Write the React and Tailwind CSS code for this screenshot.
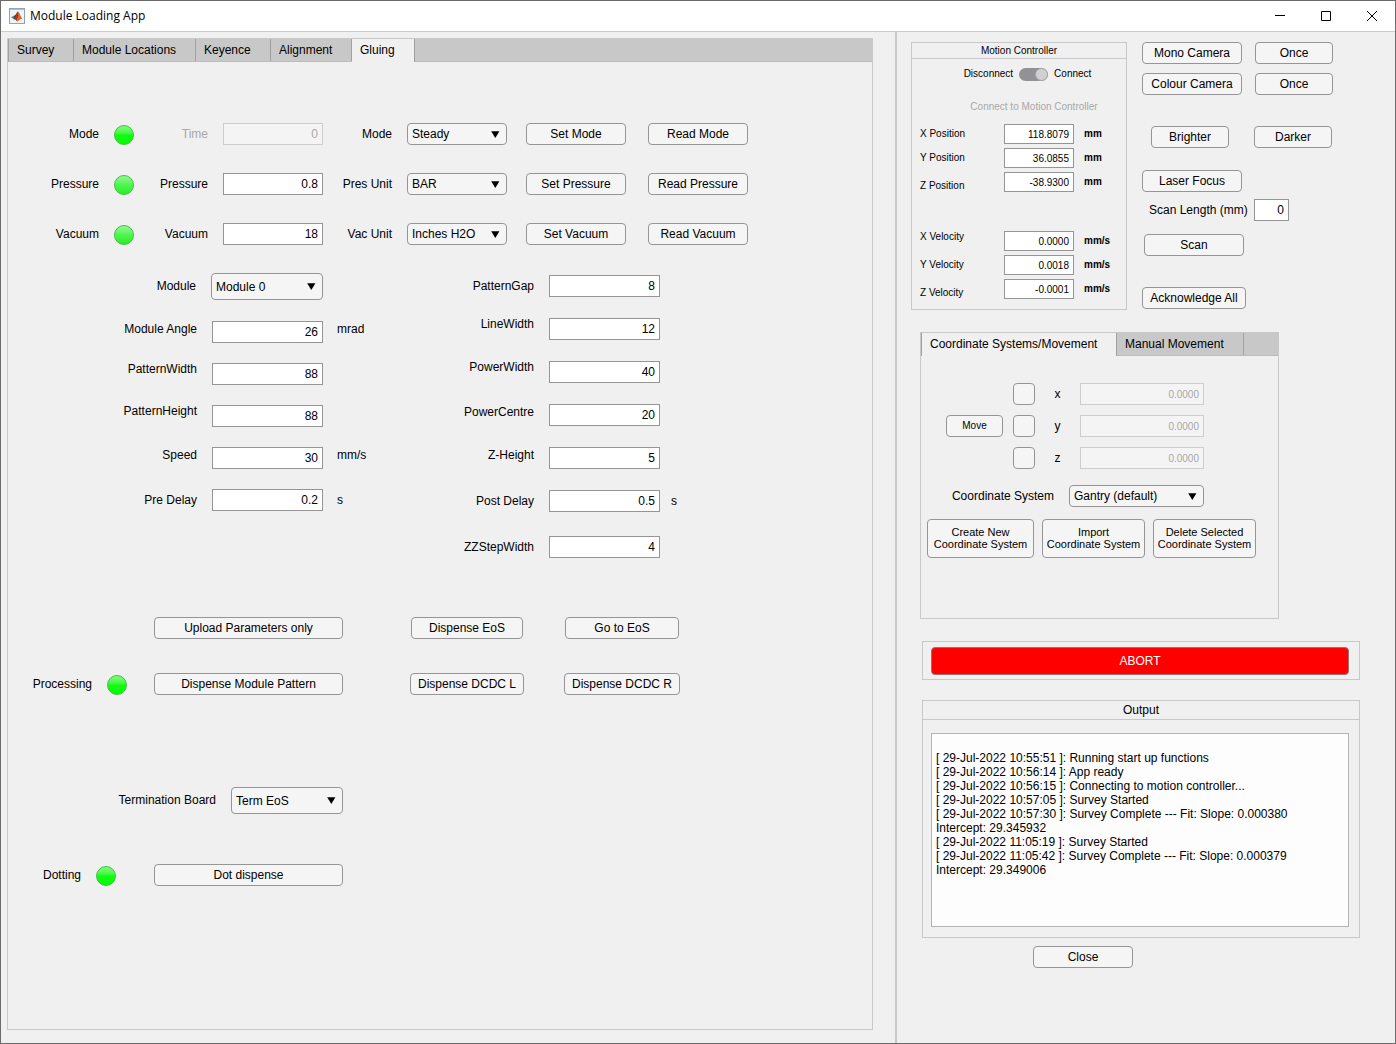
import { useState } from 'react';

const DISPENSER_ROWS = [
  { key: 'mode',     name: 'Mode',     field: 'Time',     value: '0',   disabled: true,  unitLabel: 'Mode',      unit: 'Steady',     ledDim: false },
  { key: 'pressure', name: 'Pressure', field: 'Pressure', value: '0.8', disabled: false, unitLabel: 'Pres Unit', unit: 'BAR',        ledDim: true },
  { key: 'vacuum',   name: 'Vacuum',   field: 'Vacuum',   value: '18',  disabled: false, unitLabel: 'Vac Unit',  unit: 'Inches H2O', ledDim: true },
];

const LEFT_PARAMS = [
  { label: 'Module Angle',  value: '26',  unit: 'mrad', align: 'top' },
  { label: 'PatternWidth',  value: '88',  align: 'high' },
  { label: 'PatternHeight', value: '88',  align: 'high' },
  { label: 'Speed',         value: '30',  unit: 'mm/s', align: 'top' },
  { label: 'Pre Delay',     value: '0.2', unit: 's',    align: 'center' },
];

const RIGHT_PARAMS = [
  { label: 'PatternGap',  value: '8',   align: 'center' },
  { label: 'LineWidth',   value: '12',  align: 'high' },
  { label: 'PowerWidth',  value: '40',  align: 'high' },
  { label: 'PowerCentre', value: '20',  align: 'top' },
  { label: 'Z-Height',    value: '5',   align: 'top' },
  { label: 'Post Delay',  value: '0.5', unit: 's', align: 'center' },
];

const POSITIONS = [
  { label: 'X Position', value: '118.8079', unit: 'mm', align: 'center' },
  { label: 'Y Position', value: '36.0855',  unit: 'mm', align: 'center' },
  { label: 'Z Position', value: '-38.9300', unit: 'mm', align: 'low' },
];

const VELOCITIES = [
  { label: 'X Velocity', value: '0.0000',  unit: 'mm/s', align: 'high' },
  { label: 'Y Velocity', value: '0.0018',  unit: 'mm/s', align: 'center' },
  { label: 'Z Velocity', value: '-0.0001', unit: 'mm/s', align: 'low' },
];

const ALIGN_CLASSES = {
  high:   'self-start leading-3',
  top:    'self-start leading-4',
  center: 'self-center leading-4',
  low:    'self-end leading-3',
};

const LOG = `
[ 29-Jul-2022 10:55:51 ]: Running start up functions
[ 29-Jul-2022 10:56:14 ]: App ready
[ 29-Jul-2022 10:56:15 ]: Connecting to motion controller...
[ 29-Jul-2022 10:57:05 ]: Survey Started
[ 29-Jul-2022 10:57:30 ]: Survey Complete --- Fit: Slope: 0.000380
Intercept: 29.345932
[ 29-Jul-2022 11:05:19 ]: Survey Started
[ 29-Jul-2022 11:05:42 ]: Survey Complete --- Fit: Slope: 0.000379
Intercept: 29.349006`;

const toId = (text) => text.toLowerCase().replace(/[^a-z0-9]+/g, '-');

function Button({ className = 'w-[100px]', children }) {
  return (
    <button
      type="button"
      className={`h-[22px] shrink-0 rounded border border-[#959595] bg-[#f5f5f5] text-center leading-4 whitespace-nowrap hover:bg-white ${className}`}
    >
      {children}
    </button>
  );
}

function NumberBox({ id, value, disabled, label, className = 'h-[22px] w-[111px]' }) {
  return (
    <input
      id={id}
      type="text"
      aria-label={label}
      defaultValue={value}
      disabled={disabled}
      className={`shrink-0 border border-[#959595] bg-white pr-1 text-right disabled:border-[#cdcdcd] disabled:bg-[#f4f4f4] disabled:text-[#a8a8a8] ${className}`}
    />
  );
}

function DropDown({ id, value, className = 'h-[22px] w-[100px]' }) {
  return (
    <div className={`grid shrink-0 items-center ${className}`}>
      <select
        id={id}
        className="col-start-1 row-start-1 h-full w-full appearance-none rounded border border-[#959595] bg-[#f5f5f5] pl-1"
      >
        <option>{value}</option>
      </select>
      <svg className="pointer-events-none col-start-1 row-start-1 mr-[7px] justify-self-end" width="9" height="7" viewBox="0 0 9 7" aria-hidden="true">
        <path d="M0.2 0.2h8.2L4.3 7z" fill="#000" />
      </svg>
    </div>
  );
}

function Led({ label, dim }) {
  return (
    <span
      role="img"
      aria-label={`${label} status: on`}
      className={`size-5 shrink-0 self-end rounded-full border border-[#3fc03f] bg-linear-to-b ${dim ? 'from-[#8ffa8f] via-[#4df54d] to-[#22f022]' : 'from-[#7dfa7d] via-[#12fb12] to-[#00ff00]'}`}
    />
  );
}

function ParamRow({ row, labelWidth, unitGap }) {
  const id = toId(row.label);
  return (
    <div className="flex h-[22px]">
      <label htmlFor={id} className={`mr-[15px] text-right ${labelWidth} ${ALIGN_CLASSES[row.align]}`}>{row.label}</label>
      <NumberBox id={id} value={row.value} />
      {row.unit && <span className={`${unitGap} ${ALIGN_CLASSES[row.align]}`}>{row.unit}</span>}
    </div>
  );
}

function AxisRow({ row }) {
  const id = toId(row.label);
  return (
    <div className="flex h-5">
      <label htmlFor={id} className={`w-[84px] ${ALIGN_CLASSES[row.align]}`}>{row.label}</label>
      <NumberBox id={id} value={row.value} className="h-5 w-[70px]" />
      <span className="ml-[10px] self-center font-bold">{row.unit}</span>
    </div>
  );
}

function TabList({ children }) {
  return (
    <div role="tablist" className="flex h-[23px] border-b border-l border-b-[#bcbcbc] border-l-[#a0a0a0] bg-[#c8c8c8]">
      {children}
    </div>
  );
}

function Tab({ active, width, children }) {
  return (
    <button
      type="button"
      role="tab"
      aria-selected={active}
      className={`border-r border-[#a0a0a0] pl-2 text-left ${active ? '-mb-px bg-[#f0f0f0] pb-px' : 'bg-[#c8c8c8]'} ${width}`}
    >
      {children}
    </button>
  );
}

function TitleBar() {
  return (
    <header className="flex h-[31px] items-center border-b border-[#cccccc] bg-white pl-2">
      <svg width="16" height="16" viewBox="0 0 16 16" aria-hidden="true">
        <rect x="0.5" y="0.5" width="15" height="15" fill="#eef3f8" stroke="#8aa5b8" />
        <path d="M1 1.500h14" stroke="#a9c3d4" />
        <path d="M2 9.200l3.300-1.600 1.600 1.800-2 1.900z" fill="#3f86a8" />
        <path d="M5.200 7.700C6.800 7 7.700 4.100 9 3.400L7.500 10.500 4.900 11.300z" fill="#5a3f48" />
        <path d="M9 3.400c1.600.6 2.800 6 5 8.200-1.800-.9-2.800-.5-3.600.3-.9.9-1.600 1.600-2.600 1.500C9 10 9.200 6 9 3.400z" fill="#e0662e" />
        <path d="M9 3.400c.5 2.600.2 6.600-1.200 10-.4-1.100-1.400-1.900-2.900-2.100C7 10.200 7.800 4.600 9 3.400z" fill="#a8371f" />
      </svg>
      <h1 className="ml-[5px] flex-1 font-['Open_Sans',sans-serif] text-[12px]">Module Loading App</h1>
      <button type="button" aria-label="Minimize" className="flex h-full w-[46px] items-center justify-center">
        <svg width="10" height="10" viewBox="0 0 10 10"><path d="M0 4.5h10" stroke="#000" /></svg>
      </button>
      <button type="button" aria-label="Maximize" className="flex h-full w-[46px] items-center justify-center">
        <svg width="10" height="10" viewBox="0 0 10 10"><path d="M.5.5h9v9h-9z" fill="none" stroke="#000" /></svg>
      </button>
      <button type="button" aria-label="Close window" className="flex h-full w-[46px] items-center justify-center">
        <svg width="10" height="10" viewBox="0 0 10 10"><path d="M0 0l10 10M10 0L0 10" stroke="#000" /></svg>
      </button>
    </header>
  );
}

function GluingPanel() {
  return (
    <section className="flex flex-1 flex-col border border-[#c8c8c8]">
      <TabList>
        <Tab width="w-[65px]">Survey</Tab>
        <Tab width="w-[122px]">Module Locations</Tab>
        <Tab width="w-[75px]">Keyence</Tab>
        <Tab width="w-[81px]">Alignment</Tab>
        <Tab active width="w-[63px]">Gluing</Tab>
      </TabList>

      <div role="tabpanel" className="pt-[61px]">
        <div className="flex flex-col gap-7">
          {DISPENSER_ROWS.map((row) => (
            <div key={row.key} className="flex h-[22px] items-center">
              <span className="mr-[15px] w-[91px] text-right">{row.name}</span>
              <Led label={row.name} dim={row.ledDim} />
              <label htmlFor={`${row.key}-value`} className={`mr-[15px] w-[74px] text-right ${row.disabled ? 'text-[#a8a8a8]' : ''}`}>
                {row.field}
              </label>
              <NumberBox id={`${row.key}-value`} value={row.value} disabled={row.disabled} className="h-[22px] w-[100px]" />
              <label htmlFor={`${row.key}-unit`} className="mr-[15px] w-[69px] text-right">{row.unitLabel}</label>
              <DropDown id={`${row.key}-unit`} value={row.unit} />
              <div className="ml-[19px] flex gap-[22px]">
                <Button>Set {row.name}</Button>
                <Button>Read {row.name}</Button>
              </div>
            </div>
          ))}
        </div>

        <div className="mt-7 flex">
          <div className="flex w-[400px] flex-col gap-5">
            <div className="flex h-7 items-start">
              <label htmlFor="module" className="mr-[15px] w-[188px] text-right leading-[26px]">Module</label>
              <DropDown id="module" value="Module 0" className="h-[27px] w-28" />
            </div>
            {LEFT_PARAMS.map((row) => (
              <ParamRow key={row.label} row={row} labelWidth="w-[189px]" unitGap="ml-[14px]" />
            ))}
          </div>
          <div className="flex flex-col gap-6 pt-[2px]">
            <div className="flex flex-col gap-[21px]">
              {RIGHT_PARAMS.map((row) => (
                <ParamRow key={row.label} row={row} labelWidth="w-[126px]" unitGap="ml-[11px]" />
              ))}
            </div>
            <ParamRow row={{ label: 'ZZStepWidth', value: '4', align: 'center' }} labelWidth="w-[126px]" unitGap="ml-[11px]" />
          </div>
        </div>

        <div className="mt-[59px] flex pl-[146px]">
          <Button className="w-[189px]">Upload Parameters only</Button>
          <div className="ml-[68px] flex gap-[42px]">
            <Button className="w-28">Dispense EoS</Button>
            <Button className="w-[114px]">Go to EoS</Button>
          </div>
        </div>
        <div className="mt-[34px] flex h-[22px] items-center">
          <span className="mr-[15px] w-[84px] text-right">Processing</span>
          <Led label="Processing" />
          <Button className="ml-[27px] w-[189px]">Dispense Module Pattern</Button>
          <div className="ml-[67px] flex gap-10">
            <Button className="w-[114px]">Dispense DCDC L</Button>
            <Button className="w-[116px]">Dispense DCDC R</Button>
          </div>
        </div>

        <div className="mt-[92px] flex items-start">
          <label htmlFor="termination" className="mr-[15px] w-[208px] text-right leading-[26px]">Termination Board</label>
          <DropDown id="termination" value="Term EoS" className="h-[27px] w-28" />
        </div>
        <div className="mt-[50px] flex h-[22px] items-center">
          <span className="mr-[15px] w-[73px] text-right">Dotting</span>
          <Led label="Dotting" />
          <Button className="ml-[38px] w-[189px]">Dot dispense</Button>
        </div>
      </div>
    </section>
  );
}

function MotionController() {
  const [connected, setConnected] = useState(true);

  return (
    <section className="h-[268px] w-[216px] shrink-0 border border-[#c8c8c8] text-[10px]">
      <h2 className="h-4 border-b border-[#c8c8c8] text-center leading-4">Motion Controller</h2>
      <div className="mt-2 flex h-[14px] items-center justify-center pl-[17px]">
        <span>Disconnect</span>
        <button
          type="button"
          role="switch"
          aria-label="Motion controller connection"
          aria-checked={connected}
          onClick={() => setConnected(!connected)}
          className={`mx-[6px] flex h-[13px] w-[29px] rounded-full bg-[#929296] ${connected ? 'justify-end' : 'justify-start'}`}
        >
          <span className="size-[13px] rounded-full border border-[#a6a6a6] bg-[#d0d0d0]" />
        </button>
        <span>Connect</span>
      </div>
      <p className="mt-[18px] pl-[30px] text-center leading-4 text-[#a8a8a8]">Connect to Motion Controller</p>
      <div className="mt-[9px] flex flex-col gap-1 pl-2">
        {POSITIONS.map((row) => <AxisRow key={row.label} row={row} />)}
      </div>
      <div className="mt-[39px] flex flex-col gap-1 pl-2">
        {VELOCITIES.map((row) => <AxisRow key={row.label} row={row} />)}
      </div>
    </section>
  );
}

function CameraControls() {
  return (
    <div className="flex flex-col items-start">
      <div className="flex flex-col gap-[9px]">
        <div className="flex gap-[13px]">
          <Button>Mono Camera</Button>
          <Button className="w-[78px]">Once</Button>
        </div>
        <div className="flex gap-[13px]">
          <Button>Colour Camera</Button>
          <Button className="w-[78px]">Once</Button>
        </div>
      </div>
      <div className="mt-[31px] ml-[9px] flex gap-[25px]">
        <Button className="w-[78px]">Brighter</Button>
        <Button className="w-[78px]">Darker</Button>
      </div>
      <Button className="mt-[22px] w-[100px]">Laser Focus</Button>
      <div className="mt-[7px] ml-[7px] flex items-center">
        <label htmlFor="scan-length" className="w-[105px]">Scan Length (mm)</label>
        <NumberBox id="scan-length" value="0" className="h-[22px] w-[35px]" />
      </div>
      <Button className="mt-[13px] ml-[2px] w-[100px]">Scan</Button>
      <Button className="mt-[31px] w-[104px]">Acknowledge All</Button>
    </div>
  );
}

function CoordinateButton({ width, action }) {
  return (
    <button type="button" className={`h-[39px] rounded border border-[#959595] bg-[#f5f5f5] pb-[2px] leading-3 whitespace-nowrap hover:bg-white ${width}`}>
      {action}<br />Coordinate System
    </button>
  );
}

function CoordinatePanel() {
  return (
    <section className="h-[287px] w-[359px] border border-[#c8c8c8]">
      <TabList>
        <Tab active width="w-[195px]">Coordinate Systems/Movement</Tab>
        <Tab width="w-[127px]">Manual Movement</Tab>
      </TabList>

      <div role="tabpanel" className="pt-[27px]">
        <div className="flex items-center pl-[25px]">
          <Button className="w-[57px] text-[10px]">Move</Button>
          <div className="ml-[10px] flex flex-col gap-[10px]">
            {['x', 'y', 'z'].map((axis) => (
              <div key={axis} className="flex items-center">
                <input
                  id={`move-${axis}`}
                  type="checkbox"
                  className="size-[22px] appearance-none rounded border border-[#959595] bg-[#f5f5f5] checked:bg-[#c8c8c8]"
                />
                <label htmlFor={`move-${axis}`} className="w-[45px] text-center">{axis}</label>
                <NumberBox label={`${axis} target`} value="0.0000" disabled className="h-[22px] w-[124px] text-[10px]" />
              </div>
            ))}
          </div>
        </div>
        <div className="mt-4 flex items-center">
          <label htmlFor="coordinate-system" className="mr-[15px] w-[133px] text-right">Coordinate System</label>
          <DropDown id="coordinate-system" value="Gantry (default)" className="h-[22px] w-[135px]" />
        </div>
        <div className="mt-3 flex gap-2 pl-[6px] text-[11px]">
          <CoordinateButton width="w-[107px]" action="Create New" />
          <CoordinateButton width="w-[103px]" action="Import" />
          <CoordinateButton width="w-[103px]" action="Delete Selected" />
        </div>
      </div>
    </section>
  );
}

function ControlPanel() {
  return (
    <aside className="flex w-[500px] shrink-0 flex-col border-l-2 border-[#c8c8c8] pt-[10px]">
      <div className="flex gap-[15px] pl-[14px]">
        <MotionController />
        <CameraControls />
      </div>
      <div className="mt-[22px] pl-[23px]">
        <CoordinatePanel />
      </div>
      <div className="mt-[22px] mr-[35px] ml-[25px] flex flex-col">
        <div className="border border-[#c8c8c8] pt-[5px] pr-[10px] pb-1 pl-2">
          <button type="button" className="block h-7 w-full rounded border border-[#a07070] bg-[#ff0000] text-white">
            ABORT
          </button>
        </div>
        <section className="mt-5 border border-[#c8c8c8]">
          <h2 className="h-[19px] border-b border-[#c8c8c8] text-center leading-[18px]">Output</h2>
          <div className="pt-[13px] pr-[10px] pb-[10px] pl-2">
            <textarea
              aria-label="Output"
              readOnly
              value={LOG}
              className="block h-[194px] w-full resize-none border border-[#b4b4b4] bg-[#fdfdfd] px-1 py-[3px] leading-[14px]"
            />
          </div>
        </section>
        <Button className="mt-2 ml-[111px] w-[100px]">Close</Button>
      </div>
    </aside>
  );
}

export default function App() {
  return (
    <div className="flex min-h-screen flex-col border border-[#6b6b6b] bg-[#f0f0f0] font-['Liberation_Sans',Arial,sans-serif] text-[12px] leading-4 text-black">
      <TitleBar />
      <main className="flex flex-1">
        <div className="flex flex-1 flex-col pt-[6px] pr-[22px] pb-[13px] pl-[6px]">
          <GluingPanel />
        </div>
        <ControlPanel />
      </main>
    </div>
  );
}
